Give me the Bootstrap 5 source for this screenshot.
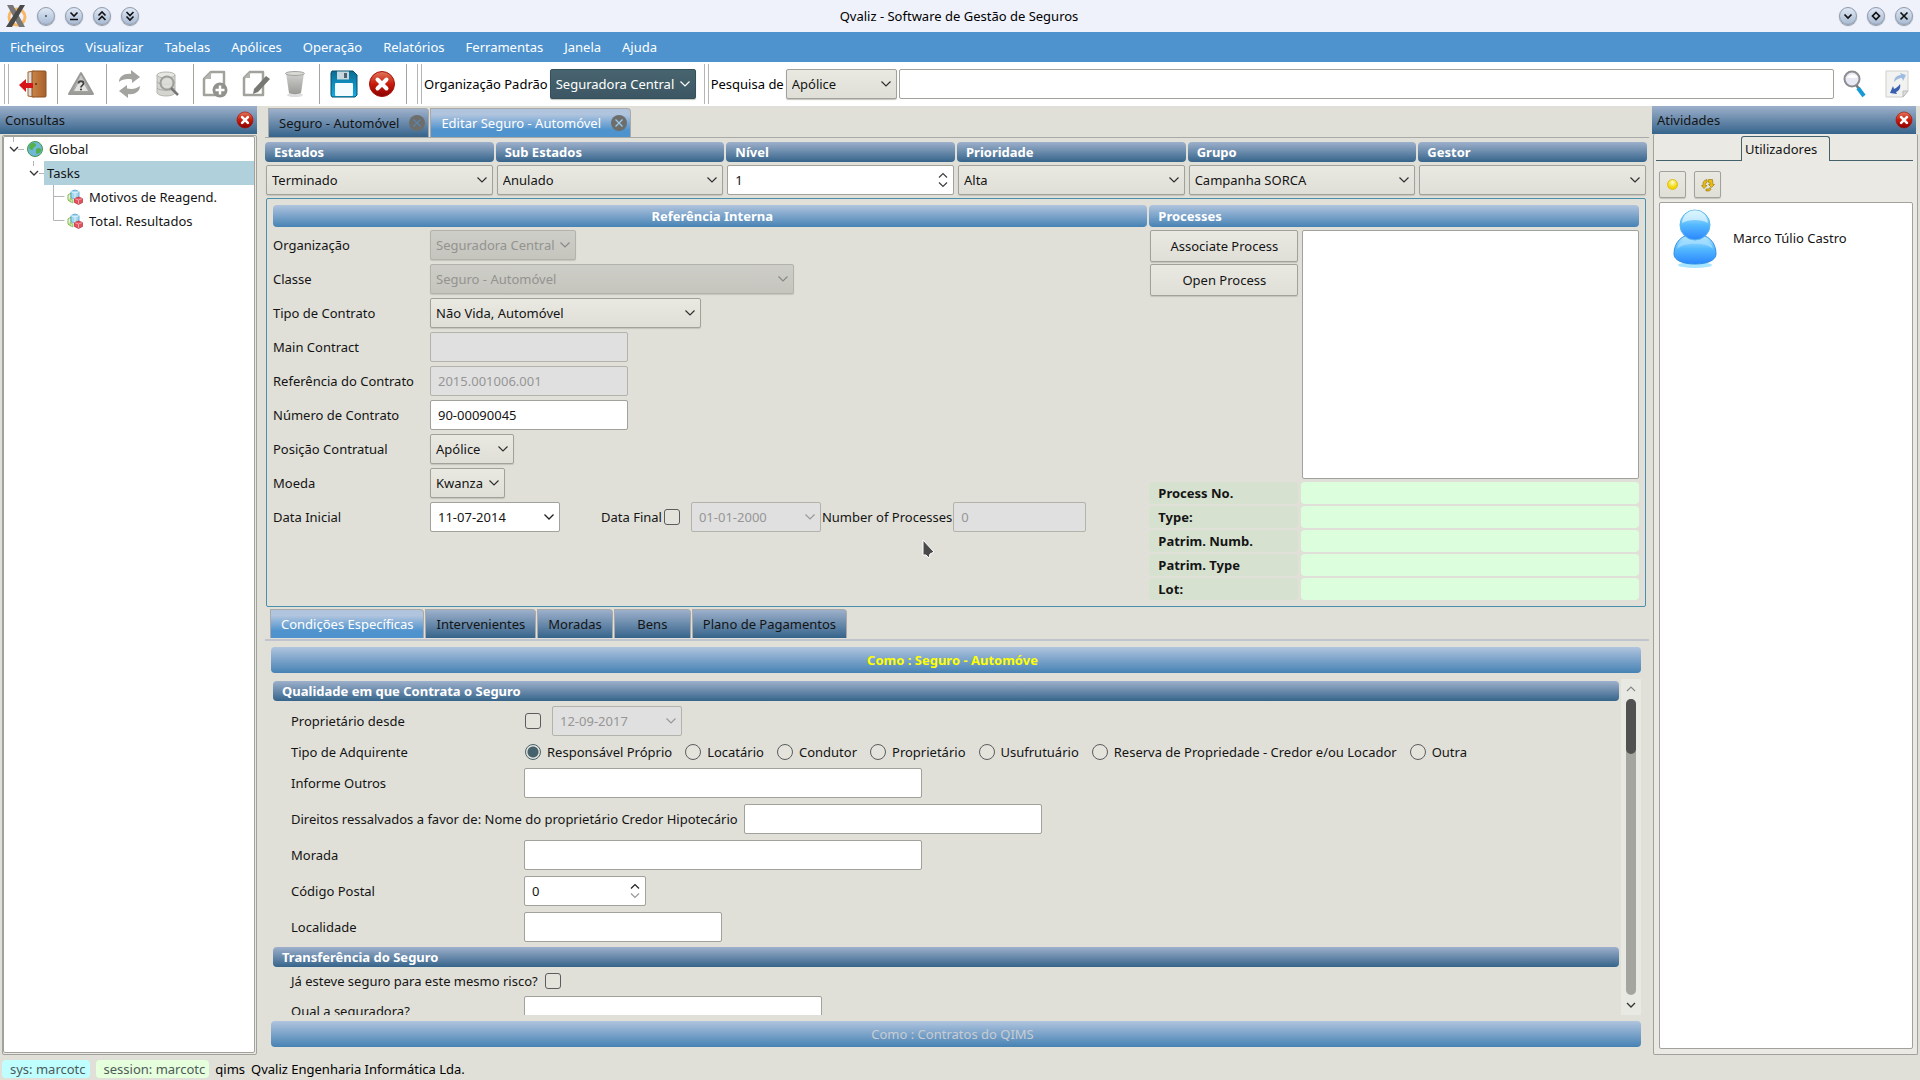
<!DOCTYPE html>
<html lang="pt">
<head>
<meta charset="utf-8">
<meta name="viewport" content="width=device-width, initial-scale=1">
<title>Qvaliz - Software de Gestão de Seguros</title>
<link href="https://cdn.jsdelivr.net/npm/bootstrap@5.3.0/dist/css/bootstrap.min.css" rel="stylesheet">
<style>
:root{--face:#e0e0d8;--line:#a2a29c;--dark-bar:linear-gradient(#9db0cb,#36648b);--light-bar:linear-gradient(#b0c4de,#4682b4);--tab-on:linear-gradient(#b0c4de 0,#b0c4de 20%,#4e93ce 75%)}
body{font-family:"Noto Sans",sans-serif;font-size:13px;line-height:18px;color:#141414;background:var(--face)}
.titlebar{height:32px;background:#eff2fa;padding:0 7px 0 5px}
.titlebar-side{flex:1 1 0;gap:10px}
.winbtn{width:18px;height:18px;border-radius:50%;border:1px solid #8f9aab;background:linear-gradient(#dfe8f5,#a9bbd4);padding:0;box-shadow:0 1px 1px #8b94a3}
.winbtn svg{display:block;width:16px;height:16px}
.menubar{height:30px;background:#4e93ce;padding:0 10px;gap:21px}
.menubar a{color:#fff}
.toolstrip{height:44px;background:#fff;padding-right:8px}
.toolstrip label{color:#000;white-space:nowrap;padding-left:2px}
.tool{width:28px;height:28px;padding:0;border:0;background:none}
.tool svg{display:block;width:28px;height:28px}
.vrule{width:1px;height:40px;background:#a5a5a0}
.grip{width:5px;height:40px;border:solid #b5b5b5;border-width:0 1px;flex:none}
.form-select,.form-control,.push{height:30px;font-size:13px;line-height:18px;color:#141414;border:1px solid var(--line);border-radius:2px;min-height:0}
.form-select{padding:0 20px 0 5px;background-color:#e5e5dd;background-image:url("data:image/svg+xml,%3Csvg xmlns='http://www.w3.org/2000/svg' viewBox='0 0 10 6'%3E%3Cpath d='M.5.5 5 5 9.500.5' fill='none' stroke='%23303030' stroke-width='1.200'/%3E%3C/svg%3E"),linear-gradient(#e9e9e2,#dfdfd7);background-size:10px 6px,100% 100%;background-position:right 5px center,0 0;box-shadow:0 1px 1px #c4c4bc}
.form-select:disabled{color:#93938f;background-color:#c9c9c2;border-color:#b3b3ac;background-image:url("data:image/svg+xml,%3Csvg xmlns='http://www.w3.org/2000/svg' viewBox='0 0 10 6'%3E%3Cpath d='M.5.5 5 5 9.500.5' fill='none' stroke='%23888888' stroke-width='1.200'/%3E%3C/svg%3E"),linear-gradient(#cecec8,#c5c5be)}
.form-select.strong{color:#fff;border-color:#34505b;background-image:url("data:image/svg+xml,%3Csvg xmlns='http://www.w3.org/2000/svg' viewBox='0 0 10 6'%3E%3Cpath d='M.5.5 5 5 9.500.5' fill='none' stroke='white' stroke-width='1.200'/%3E%3C/svg%3E"),linear-gradient(#48646f,#3c5763)}
.form-control{padding:0 7px;background-color:#fff}
.form-control:disabled{color:#969696;background-color:#e0e0e0;border-color:#b3b3ac;opacity:1}
.datebox{background-image:url("data:image/svg+xml,%3Csvg xmlns='http://www.w3.org/2000/svg' viewBox='0 0 10 6'%3E%3Cpath d='M.5.5 5 5 9.500.5' fill='none' stroke='%23202020' stroke-width='1.300'/%3E%3C/svg%3E");background-repeat:no-repeat;background-size:10px 6px;background-position:right 5px center}
.datebox:disabled{background-image:url("data:image/svg+xml,%3Csvg xmlns='http://www.w3.org/2000/svg' viewBox='0 0 10 6'%3E%3Cpath d='M.5.5 5 5 9.500.5' fill='none' stroke='%23999999' stroke-width='1.200'/%3E%3C/svg%3E")}
.spinbox{appearance:textfield;-moz-appearance:textfield;background-image:url("data:image/svg+xml,%3Csvg xmlns='http://www.w3.org/2000/svg' viewBox='0 0 10 16'%3E%3Cpath d='M1 5.500 5 1.500 9 5.500M1 10.500 5 14.500 9 10.500' fill='none' stroke='%23404040' stroke-width='1.200'/%3E%3C/svg%3E");background-repeat:no-repeat;background-size:10px 16px;background-position:right 5px center}
.spinbox.at-min{background-image:url("data:image/svg+xml,%3Csvg xmlns='http://www.w3.org/2000/svg' viewBox='0 0 10 16' fill='none' stroke-width='1.200'%3E%3Cpath d='M1 5.500 5 1.500 9 5.500' stroke='%23202020'/%3E%3Cpath d='M1 10.500 5 14.500 9 10.500' stroke='%23999999'/%3E%3C/svg%3E")}
.spinbox::-webkit-inner-spin-button{appearance:none;margin:0}
.form-check-input{width:16px;height:16px;margin:0;border:1px solid #5c5c5c;background-color:#e4e4dd;flex:none}
.form-check-input[type=checkbox]{border-radius:3px}
.form-check-input[type=radio]:checked{background-color:#e4e4dd;border-color:#45616c;background-image:radial-gradient(circle,#45616c 0,#45616c 5px,transparent 6px)}
.radio-set{gap:13px;padding-left:1px}
.radio-set label{display:flex;align-items:center;gap:6px}
.push{padding:0 8px;background:linear-gradient(#e9e9e2,#dfdfd7);box-shadow:0 1px 1px #c4c4bc}
.push.tall{height:32px}
.push.square{width:27px;height:27px;padding:0}
.push svg{display:block;margin:auto}
.dock{padding-right:2px}
.dock-left{width:259px}
.dock-right{width:268px}
.dock-head{height:28px;background:var(--dark-bar);padding:0 3px 1px 5px}
.dock-head .tool,.dock-head svg{width:18px;height:18px}
.dock-frame{border:1px solid var(--line);border-radius:2px;background:#eae9e4}
.listpane{background:#fff;border:1px solid var(--line);border-radius:2px}
.tree-row{height:24px}
.tree-sel{background:#b0d0dc;padding-left:3px}
.workspace{padding:2px 3px 0 6px}
.tabset{gap:1px}
.tabbtn{height:29px;border:1px solid #a9a9a9;border-bottom:0;border-radius:0 4px 0 0;background:var(--dark-bar);color:#141414;padding:0 10px;font-size:13px}
.tabbtn.closable{display:flex;align-items:center;gap:10px;padding-right:3px}
.tabbtn.chosen{background:var(--tab-on);color:#fff}
.tabclose{width:16px;height:16px;flex:none}
.ruled{border-bottom:1px solid #a9a9a5}
.ruled-thick{border-bottom:2px solid #c0c4ce}
.bar-dark,.bar-light{border-radius:4px;color:#fff;font-weight:700;padding:0 9px}
.bar-dark{height:20px;line-height:20px;background:var(--dark-bar)}
.bar-light{height:22px;line-height:22px;background:var(--light-bar)}
.bar-foot{height:26px;line-height:26px;border:0;font-size:13px;padding-right:16px}
.statusgrid{display:grid;grid-template-columns:repeat(6,1fr);gap:3px 2px;padding:4px 2px 0 0}
.statusgrid .fld{padding:0 1px}
.group{border:1px solid #4a8fab;border-radius:2px;padding:6px;margin:3px 3px 0 1px}
.group-cols{display:grid;grid-template-columns:25fr 14fr;gap:2px}
.formgrid{display:grid;grid-template-columns:157px 1fr;gap:4px 0;grid-auto-rows:30px;align-items:center;padding-top:3px}
.w75{width:75px}.w84{width:84px}.w122{width:122px}.w130{width:130px}.w146{width:146px}.w198{width:198px}.w271{width:271px}.w298{width:298px}.w364{width:364px}.w398{width:398px}
.proc-cols{display:grid;grid-template-columns:150px 1fr;column-gap:3px;padding:3px 0 3px 0}
.procbox{height:249px}
.facts{display:grid;grid-template-columns:149px 1fr;gap:2px 3px}
.facts dt,.facts dd{height:22px;line-height:22px;border-radius:4px;margin:0}
.facts dt{background:#d7e1d0;padding-left:9px}
.facts dd{background:#dcfedc}
.scrollzone{margin:6px 0}
.sheet{padding:2px 2px 0}
.sheet-rows{padding:5px 0 5px 18px}
.sheet-rows .ln{min-height:30px}
.lab{width:233px;flex:none}
.vscroll{width:20px;background:#e9e9e4;padding:6px 5px}
.groove{width:10px;border-radius:5px;background:#a5a5a0}
.thumb{height:55px;border-radius:5px;background:#515151}
.statusline{height:22px;padding:2px}
.tag{border-radius:4px;color:#4d5a5a;padding:0 4px 0 8px;height:18px}
.pointer{position:absolute;left:655px;top:340px}
.dock-tab{height:25px;border-bottom:1px solid #45616c}
.dock-tab button{margin-bottom:-1px;margin-left:85px;height:25px;border:1px solid #45616c;border-bottom:0;border-radius:3px 3px 0 0;background:#eae9e4;font-size:13px;width:89px;padding:0 3px;text-align:left;color:#141414}
</style>
</head>
<body class="vh-100 d-flex flex-column overflow-hidden">

<svg width="0" height="0" class="position-absolute" aria-hidden="true">
  <defs>
    <linearGradient id="gRed" x1="0" y1="0" x2="0" y2="1"><stop offset="0" stop-color="#e0775a"/><stop offset=".5" stop-color="#c81c0c"/><stop offset="1" stop-color="#8a0000"/></linearGradient>
    <linearGradient id="gGray" x1="0" y1="0" x2="0" y2="1"><stop offset="0" stop-color="#d2d2d0"/><stop offset="1" stop-color="#999996"/></linearGradient>
    <linearGradient id="gDoor" x1="0" y1="0" x2="1" y2="0"><stop offset="0" stop-color="#c98549"/><stop offset="1" stop-color="#a8602a"/></linearGradient>
    <linearGradient id="gSave" x1="0" y1="0" x2="0" y2="1"><stop offset="0" stop-color="#0b6d92"/><stop offset="1" stop-color="#12aeea"/></linearGradient>
    <linearGradient id="gMan" x1="0" y1="0" x2="0" y2="1"><stop offset="0" stop-color="#c9f0ff"/><stop offset=".5" stop-color="#54b9ff"/><stop offset="1" stop-color="#2a85ff"/></linearGradient>
    <radialGradient id="gSun" cx=".5" cy=".3"><stop offset="0" stop-color="#fffbd0"/><stop offset="1" stop-color="#f0d800"/></radialGradient>
  </defs>
  <symbol id="close" viewBox="0 0 28 28"><circle cx="14" cy="14" r="12.500" fill="url(#gRed)" stroke="#a31208"/><path d="M9.500 9.500l9 9m0-9l-9 9" stroke="#fff" stroke-width="4" stroke-linecap="round"/></symbol>
  <symbol id="cubes" viewBox="0 0 16 16"><path d="M1 6l3-2v9l-3-2z" fill="#eaf6dc" stroke="#7db84a"/><path d="M4 2.500L8 1l4 1.500v6L8 10.500 4 8.500z" fill="#a4d8f2" stroke="#4a9cc4" stroke-width=".8"/><path d="M4 2.500L8 4l4-1.500M8 4v6" fill="none" stroke="#e6f6ff" stroke-width=".9"/><path d="M3 9.500l3 1.500v3l-3-1.500z" fill="#cfe8a8" stroke="#7db84a" stroke-width=".7"/><path d="M7.500 9.500l4-1.500 4 1.500v4l-4 2-4-2z" fill="#e0525e" stroke="#b62c3a" stroke-width=".7"/><path d="M7.500 9.500l4 1.500v4m0-4l4-1.500" fill="none" stroke="#f6b4ba" stroke-width=".8"/></symbol>
</svg>

<header class="titlebar d-flex align-items-center flex-shrink-0">
  <div class="titlebar-side d-flex align-items-center">
    <svg width="22" height="24" viewBox="0 0 22 24" aria-hidden="true"><circle cx="12" cy="13" r="8" fill="none" stroke="#f9b765" stroke-width="3"/><path d="M2 1h6l12 22h-6z" fill="#777"/><path d="M15 1h5L7 23H1z" fill="#4a4a48"/></svg>
    <button class="winbtn" aria-label="Fixar"><svg viewBox="0 0 16 16"><circle cx="8" cy="8" r="1" fill="#34495e"/></svg></button>
    <button class="winbtn" aria-label="Manter abaixo"><svg viewBox="0 0 16 16" fill="none" stroke="#111" stroke-width="1.600"><path d="M4.500 4.500L8 8l3.500-3.500M4 11.500h8"/></svg></button>
    <button class="winbtn" aria-label="Manter acima"><svg viewBox="0 0 16 16" fill="none" stroke="#111" stroke-width="1.600"><path d="M4.500 7.500L8 4l3.500 3.500M4.500 12L8 8.500l3.500 3.500"/></svg></button>
    <button class="winbtn" aria-label="Enrolar"><svg viewBox="0 0 16 16" fill="none" stroke="#111" stroke-width="1.600"><path d="M4.500 4L8 7.500 11.500 4M4.500 8.500L8 12l3.500-3.500"/></svg></button>
  </div>
  <div class="text-black">Qvaliz - Software de Gestão de Seguros</div>
  <div class="titlebar-side d-flex align-items-center justify-content-end">
    <button class="winbtn" aria-label="Minimizar"><svg viewBox="0 0 16 16" fill="none" stroke="#111" stroke-width="1.700"><path d="M4.500 6.500L8 10l3.500-3.500"/></svg></button>
    <button class="winbtn" aria-label="Maximizar"><svg viewBox="0 0 16 16" fill="none" stroke="#111" stroke-width="1.700"><path d="M8 4.500L11.500 8 8 11.500 4.500 8z"/></svg></button>
    <button class="winbtn" aria-label="Fechar"><svg viewBox="0 0 16 16" fill="none" stroke="#111" stroke-width="1.700"><path d="M4.500 4.500l7 7m0-7l-7 7"/></svg></button>
  </div>
</header>

<nav class="menubar d-flex align-items-center flex-shrink-0">
  <a class="text-decoration-none" href="#">Ficheiros</a><a class="text-decoration-none" href="#">Visualizar</a><a class="text-decoration-none" href="#">Tabelas</a><a class="text-decoration-none" href="#">Apólices</a><a class="text-decoration-none" href="#">Operação</a><a class="text-decoration-none" href="#">Relatórios</a><a class="text-decoration-none" href="#">Ferramentas</a><a class="text-decoration-none" href="#">Janela</a><a class="text-decoration-none" href="#">Ajuda</a>
</nav>

<div class="toolstrip d-flex align-items-center flex-shrink-0">
  <div class="d-flex align-items-center" style="gap:10px;padding-left:4px">
    <span class="grip"></span>
    <button class="tool" aria-label="Sair"><svg viewBox="0 0 28 28"><path d="M9 2l6-1v26l-6-1z" fill="#ddd" stroke="#a8602a"/><rect x="13" y="1" width="14" height="26" rx="1" fill="url(#gDoor)" stroke="#8c5020"/><circle cx="17" cy="14" r="1" fill="#5a2f10"/><path d="M0 15l7-6v4h7v5H7v4z" fill="#d6151b"/></svg></button>
    <span class="vrule"></span>
    <button class="tool" aria-label="Questões"><svg viewBox="0 0 28 28"><path d="M13 3l12 21H1z" fill="url(#gGray)" stroke="#9a9a98" stroke-width="2" stroke-linejoin="round"/><path d="M13 9l7 12H6z" fill="#e4e4e2"/><path d="M10.500 13.500c0-3 5-3 5 0 0 2-2.500 1.800-2.500 4" fill="none" stroke="#444" stroke-width="1.800"/><circle cx="13" cy="19.500" r="1.100" fill="#444"/></svg></button>
    <span class="vrule"></span>
    <button class="tool" aria-label="Atualizar"><svg viewBox="0 0 28 28" fill="#a3a3a0"><path d="M2 12c0-6 6-9 12-8V0l9 7-8 6V9.500C10 8.500 6 9 2 12z"/><path d="M23 16c0 6-6 9-12 8v4l-9-7 8-6v3.500c5 1 9 .5 13-2.500z"/></svg></button>
    <button class="tool" aria-label="Procurar na base"><svg viewBox="0 0 28 28"><path d="M2 5v18c2 4 16 4 18 0V5z" fill="#d5d5d0" stroke="#b5b5b0"/><ellipse cx="11" cy="5" rx="9" ry="3" fill="#e6e6e2" stroke="#b5b5b0"/><path d="M2 12c2 3 16 3 18 0M2 18c2 3 16 3 18 0" fill="none" stroke="#aaa"/><circle cx="12" cy="13" r="6.500" fill="#ddddd9" fill-opacity=".8" stroke="#9e9e9b" stroke-width="2"/><path d="M16 18l7 7" stroke="#777" stroke-width="2.500"/></svg></button>
    <span class="vrule"></span>
  </div>
  <div class="d-flex align-items-center" style="gap:12px;padding-left:8px">
    <button class="tool" aria-label="Novo"><svg viewBox="0 0 28 28"><path d="M9 2h13v23H2V9z" fill="#fff" stroke="#a2a29d" stroke-width="2.500" stroke-linejoin="round"/><path d="M9 2v7H2z" fill="#b5b5b0"/><circle cx="18" cy="20" r="7.500" fill="#91918d"/><path d="M18 15.500v9M13.500 20h9" stroke="#fff" stroke-width="2.500"/></svg></button>
    <button class="tool" aria-label="Editar"><svg viewBox="0 0 28 28"><path d="M8 2h13v23H2V8z" fill="#fff" stroke="#a2a29d" stroke-width="2.500" stroke-linejoin="round"/><path d="M8 2v6H2z" fill="#b5b5b0"/><path d="M12 19L24 6l4 3-12 13-5 2z" fill="#777774"/></svg></button>
    <button class="tool" aria-label="Eliminar"><svg viewBox="0 0 28 28"><ellipse cx="13" cy="25" rx="8" ry="2" fill="#ddd"/><path d="M4 3h18l-3 20c-2 1.500-10 1.500-12 0z" fill="url(#gGray)"/><ellipse cx="13" cy="3.500" rx="9.500" ry="2" fill="#d8d8d5" stroke="#a3a3a0"/></svg></button>
  </div>
  <div class="d-flex align-items-center" style="gap:10px;padding-left:9px">
    <span class="vrule"></span>
    <button class="tool" aria-label="Guardar"><svg viewBox="0 0 28 28"><path d="M2 1h21l4 4v20l-2 2H2l-1-2V3z" fill="url(#gSave)" stroke="#064c66"/><rect x="7" y="1.500" width="12" height="8" fill="#c8d7dd"/><rect x="14" y="3" width="3" height="5" fill="#4a6470"/><rect x="5" y="13" width="18" height="13" rx="1" fill="#f4fbff"/></svg></button>
    <button class="tool" aria-label="Cancelar"><svg><use href="#close"/></svg></button>
    <span class="vrule"></span>
    <span class="grip"></span>
  </div>
  <label for="org">Organização Padrão</label>
  <select class="form-select strong w146 me-2 flex-shrink-0" style="margin-left:2px" id="org"><option>Seguradora Central</option></select>
  <span class="grip"></span>
  <label for="kind">Pesquisa de</label>
  <select class="form-select flex-shrink-0" id="kind" style="width:111px;margin-left:2px"><option>Apólice</option></select>
  <input class="form-control flex-fill" aria-label="Texto da pesquisa" type="text" style="width:0;margin:0 8px 0 2px">
  <div class="d-flex" style="gap:14px">
    <button class="tool" aria-label="Pesquisar"><svg viewBox="0 0 28 28"><circle cx="10" cy="9" r="7.500" fill="#e8e9f4" stroke="#8d8d90" stroke-width="2"/><path d="M5 8c1-4 8-5 11-1-4 2-8 0-11 1z" fill="#fff"/><path d="M14.500 15.500l3 4" stroke="#777" stroke-width="2.500"/><path d="M16 18l6 8" stroke="#1899d6" stroke-width="4"/></svg></button>
    <button class="tool" aria-label="Recarregar"><svg viewBox="0 0 28 28"><path d="M2 1h22v20l-5 6H2z" fill="#f2f2f0" stroke="#cfcfcc"/><path d="M24 21h-5v6z" fill="#ddd" stroke="#bbb"/><path d="M10 12c0-4 3-7 7-7l-1-2 6 2-3 6-1-3c-3 0-5 1-8 4z" fill="#9dbbe0"/><path d="M16 14c1 4-1 7-4 8l1 2-7-1 3-7 1 3c2-1 4-2 6-5z" fill="#3a5fae"/></svg></button>
  </div>
</div>

<div class="flex-fill d-flex" style="min-height:0">
  <!-- saved queries -->
  <aside class="dock dock-left d-flex flex-column flex-shrink-0">
    <div class="dock-head d-flex align-items-center justify-content-between"><span>Consultas</span><button class="tool" aria-label="Fechar Consultas"><svg><use href="#close"/></svg></button></div>
    <div class="dock-frame flex-fill d-flex" style="margin:1px 0 3px 2px;padding:0 1px 1px 0">
      <div class="listpane flex-fill">
        <div class="tree-row d-flex align-items-center"><svg width="45" height="24" viewBox="0 0 45 24"><path d="M9.500 0v5M14 12.500h6" stroke="#b5b5b5"/><path d="M6 10l4 4 4-4" fill="none" stroke="#333" stroke-width="1.300"/><circle cx="31" cy="12" r="7.500" fill="#6fb8d8" stroke="#3f9a45"/><path d="M26 7c3-2 6-1 6 1s-3 2-3 4-3 1-4-1zM32 12c3-2 6-1 5 2-1 2-4 4-5 2z" fill="#54b04c"/></svg><span>Global</span></div>
        <div class="tree-row d-flex align-items-center"><svg width="40" height="24" viewBox="0 0 40 24"><path d="M29.500 0v5M35 12.500h5" stroke="#b5b5b5"/><path d="M26 10l4 4 4-4" fill="none" stroke="#333" stroke-width="1.300"/></svg><span class="tree-sel flex-fill h-100 d-flex align-items-center">Tasks</span></div>
        <div class="tree-row d-flex align-items-center"><svg width="85" height="24" viewBox="0 0 85 24"><path d="M49.500 0v24M49.500 11.500h11" stroke="#b5b5b5"/><use href="#cubes" x="63" y="4" width="16" height="16"/></svg><span>Motivos de Reagend.</span></div>
        <div class="tree-row d-flex align-items-center"><svg width="85" height="24" viewBox="0 0 85 24"><path d="M49.500 0v11.500h11" fill="none" stroke="#b5b5b5"/><use href="#cubes" x="63" y="4" width="16" height="16"/></svg><span>Total. Resultados</span></div>
      </div>
    </div>
  </aside>

  <!-- policy editor -->
  <main class="workspace flex-fill d-flex flex-column" style="min-width:0">
    <div class="tabset ruled d-flex flex-shrink-0" style="padding-left:3px">
      <button class="tabbtn closable">Seguro - Automóvel<svg class="tabclose" viewBox="0 0 16 16"><circle cx="8" cy="8" r="8" fill="#6d6d6b"/><path d="M4.500 4.500l7 7m0-7l-7 7" stroke="#5b84ab" stroke-width="1.300"/></svg></button>
      <button class="tabbtn closable chosen">Editar Seguro - Automóvel<svg class="tabclose" viewBox="0 0 16 16"><circle cx="8" cy="8" r="8" fill="#6d6d6b"/><path d="M4.500 4.500l7 7m0-7l-7 7" stroke="#9cc8ec" stroke-width="1.300"/></svg></button>
    </div>

    <div class="statusgrid flex-shrink-0">
      <label class="bar-dark" for="s1">Estados</label><label class="bar-dark" for="s2">Sub Estados</label><label class="bar-dark" for="s3">Nível</label><label class="bar-dark" for="s4">Prioridade</label><label class="bar-dark" for="s5">Grupo</label><label class="bar-dark" for="s6">Gestor</label>
      <div class="fld"><select class="form-select" id="s1"><option>Terminado</option></select></div>
      <div class="fld"><select class="form-select" id="s2"><option>Anulado</option></select></div>
      <div class="fld"><input class="form-control spinbox" id="s3" type="number" value="1"></div>
      <div class="fld"><select class="form-select" id="s4"><option>Alta</option></select></div>
      <div class="fld"><select class="form-select" id="s5"><option>Campanha SORCA</option></select></div>
      <div class="fld"><select class="form-select" id="s6"><option></option></select></div>
    </div>

    <section class="group group-cols position-relative flex-shrink-0">
      <div>
        <div class="bar-light text-center" style="padding-left:13px">Referência Interna</div>
        <div class="formgrid">
          <label for="f1">Organização</label><select class="form-select w146" id="f1" disabled><option>Seguradora Central</option></select>
          <label for="f2">Classe</label><select class="form-select w364" id="f2" disabled><option>Seguro - Automóvel</option></select>
          <label for="f3">Tipo de Contrato</label><select class="form-select w271" id="f3"><option>Não Vida, Automóvel</option></select>
          <label for="f4">Main Contract</label><input class="form-control w198" id="f4" type="text" disabled>
          <label for="f5">Referência do Contrato</label><input class="form-control w198" id="f5" type="text" value="2015.001006.001" disabled>
          <label for="f6">Número de Contrato</label><input class="form-control w198" id="f6" type="text" value="90-00090045">
          <label for="f7">Posição Contratual</label><select class="form-select w84" id="f7"><option>Apólice</option></select>
          <label for="f8">Moeda</label><select class="form-select w75" id="f8"><option>Kwanza</option></select>
          <label for="f9">Data Inicial</label>
          <div class="d-flex align-items-center">
            <input class="form-control datebox w130" id="f9" type="text" value="11-07-2014">
            <label for="f10" style="margin-left:41px">Data Final</label>
            <input class="form-check-input" style="margin:0 11px 0 2px" id="f10" type="checkbox">
            <input class="form-control datebox w130" aria-label="Data Final" type="text" value="01-01-2000" disabled>
            <label for="f11" style="margin:0 1px">Number of Processes</label>
            <input class="form-control" style="width:133px" id="f11" type="text" value="0" disabled>
          </div>
        </div>
      </div>
      <div>
        <div class="bar-light">Processes</div>
        <div class="proc-cols">
          <div class="d-grid align-content-start" style="gap:2px;padding:0 1px"><button class="push tall">Associate Process</button><button class="push tall">Open Process</button></div>
          <div class="listpane procbox"></div>
        </div>
        <dl class="facts m-0"><dt>Process No.</dt><dd></dd><dt>Type:</dt><dd></dd><dt>Patrim. Numb.</dt><dd></dd><dt>Patrim. Type</dt><dd></dd><dt>Lot:</dt><dd></dd></dl>
      </div>
      <svg class="pointer" width="14" height="20" viewBox="0 0 14 20" aria-hidden="true"><path d="M1 1v15h3l3 3 1-4 4-2z" fill="#4a4a4a" stroke="#fff" stroke-width="1"/></svg>
    </section>

    <div class="tabset ruled-thick d-flex flex-shrink-0" style="padding:2px 0 1px 5px">
      <button class="tabbtn chosen">Condições Específicas</button><button class="tabbtn">Intervenientes</button><button class="tabbtn">Moradas</button><button class="tabbtn" style="width:77px">Bens</button><button class="tabbtn">Plano de Pagamentos</button>
    </div>

    <div class="flex-fill d-flex flex-column" style="min-height:0;padding:6px 8px 11px 6px">
      <button class="bar-light bar-foot text-center flex-shrink-0" style="color:#ff0">Como : Seguro - Automóve</button>
      <div class="scrollzone flex-fill d-flex" style="min-height:0">
        <div class="sheet flex-fill overflow-hidden">
          <div class="bar-dark">Qualidade em que Contrata o Seguro</div>
          <div class="sheet-rows d-flex flex-column" style="gap:6px">
            <div class="d-flex flex-column" style="gap:1px">
              <div class="ln d-flex align-items-center"><label class="lab" for="q1">Proprietário desde</label><input class="form-check-input" style="margin:0 11px 0 1px" id="q1" type="checkbox"><input class="form-control datebox w130" aria-label="Data de proprietário" type="text" value="12-09-2017" disabled></div>
              <div class="ln d-flex align-items-center" role="radiogroup" aria-label="Tipo de Adquirente"><span class="lab">Tipo de Adquirente</span>
                <div class="radio-set d-flex">
                  <label><input class="form-check-input" type="radio" name="adq" checked>Responsável Próprio</label>
                  <label><input class="form-check-input" type="radio" name="adq">Locatário</label>
                  <label><input class="form-check-input" type="radio" name="adq">Condutor</label>
                  <label><input class="form-check-input" type="radio" name="adq">Proprietário</label>
                  <label><input class="form-check-input" type="radio" name="adq">Usufrutuário</label>
                  <label><input class="form-check-input" type="radio" name="adq">Reserva de Propriedade - Credor e/ou Locador</label>
                  <label><input class="form-check-input" type="radio" name="adq">Outra</label>
                </div>
              </div>
              <div class="ln d-flex align-items-center"><label class="lab" for="q2">Informe Outros</label><input class="form-control w398" id="q2" type="text"></div>
            </div>
            <div class="ln d-flex align-items-center" style="gap:6px"><label for="q3">Direitos ressalvados a favor de: Nome do proprietário Credor Hipotecário</label><input class="form-control w298" id="q3" type="text"></div>
            <div class="ln d-flex align-items-center"><label class="lab" for="q4">Morada</label><input class="form-control w398" id="q4" type="text"></div>
            <div class="ln d-flex align-items-center"><label class="lab" for="q5">Código Postal</label><input class="form-control spinbox at-min w122" id="q5" type="number" value="0" min="0"></div>
            <div class="ln d-flex align-items-center"><label class="lab" for="q6">Localidade</label><input class="form-control w198" id="q6" type="text"></div>
          </div>
          <div class="bar-dark">Transferência do Seguro</div>
          <div class="sheet-rows">
            <div class="d-flex align-items-center" style="height:18px;gap:7px"><label for="q7">Já esteve seguro para este mesmo risco?</label><input class="form-check-input" id="q7" type="checkbox"></div>
            <div class="ln d-flex align-items-center" style="margin-top:6px"><label class="lab" for="q8">Qual a seguradora?</label><input class="form-control w298" id="q8" type="text"></div>
          </div>
        </div>
        <div class="vscroll d-flex flex-column align-items-center justify-content-between flex-shrink-0" aria-hidden="true">
          <svg width="10" height="8" viewBox="0 0 10 8"><path d="M1 6l4-4 4 4" fill="none" stroke="#888" stroke-width="1.200"/></svg>
          <div class="groove flex-fill" style="margin:6px 0"><div class="thumb"></div></div>
          <svg width="10" height="8" viewBox="0 0 10 8"><path d="M1 2l4 4 4-4" fill="none" stroke="#333" stroke-width="1.300"/></svg>
        </div>
      </div>
      <button class="bar-light bar-foot text-center fw-normal flex-shrink-0" style="color:#c8cdd3">Como : Contratos do QIMS</button>
    </div>
  </main>

  <!-- activities -->
  <aside class="dock dock-right d-flex flex-column flex-shrink-0">
    <div class="dock-head d-flex align-items-center justify-content-between" style="margin-right:2px"><span>Atividades</span><button class="tool" aria-label="Fechar Atividades"><svg><use href="#close"/></svg></button></div>
    <div class="dock-frame flex-fill d-flex flex-column border-top-0" style="margin:0 0 3px 1px;padding:2px 4px 5px 2px">
      <div class="dock-tab d-flex"><button>Utilizadores</button></div>
      <div class="d-flex" style="gap:8px;padding:10px 0 4px 3px">
        <button class="push square" aria-label="Estado"><svg width="13" height="13" viewBox="0 0 13 13"><circle cx="6.500" cy="6.500" r="5" fill="url(#gSun)" stroke="#e0bd20"/></svg></button>
        <button class="push square" aria-label="Atualizar utilizadores"><svg width="14" height="14" viewBox="0 0 14 14" fill="#e8bd10" stroke="#94700a" stroke-width=".6"><path d="M6 1.500v3C4.500 5 4 6 4.500 7.500H6L3 10.500.5 7.500H2C1.500 4 3 2 6 1.500z"/><path d="M7.500 1.500h4l.5 5h1.500L10.500 9.500 7.500 6.500H9V5L7 4z"/><path d="M9 9.500l1 2-2 1.500H5V11h3z"/></svg></button>
      </div>
      <div class="listpane flex-fill" style="margin-left:3px">
        <div class="d-flex align-items-center" style="padding:4px 12px;gap:15px">
          <svg width="46" height="62" viewBox="0 0 46 62" aria-hidden="true"><ellipse cx="23" cy="58" rx="17" ry="3" fill="#a8e6ff"/><path d="M2 47c0-11 7-20 21-20s21 9 21 20c0 6-8 10-21 10S2 53 2 47z" fill="url(#gMan)" stroke="#2f8fe0"/><path d="M5 42c3-10 10-12 18-12s15 2 18 12c-6-7-30-7-36 0z" fill="#a8e0ff" opacity=".7"/><circle cx="23" cy="18" r="15" fill="url(#gMan)" stroke="#5ab6ea"/><path d="M10 16c2-17 24-17 26 0-6-4-20-4-26 0z" fill="#e4f8ff" opacity=".7"/></svg>
          <span>Marco Túlio Castro</span>
        </div>
      </div>
    </div>
  </aside>
</div>

<footer class="statusline d-flex text-black flex-shrink-0" style="gap:6px">
  <span class="tag" style="background:#bfffff">sys: marcotc</span><span class="tag" style="background:#e6ffdc">session: marcotc</span><span>qims</span><span>Qvaliz Engenharia Informática Lda.</span>
</footer>
<script src="https://cdn.jsdelivr.net/npm/bootstrap@5.3.0/dist/js/bootstrap.bundle.min.js"></script>
</body>
</html>
